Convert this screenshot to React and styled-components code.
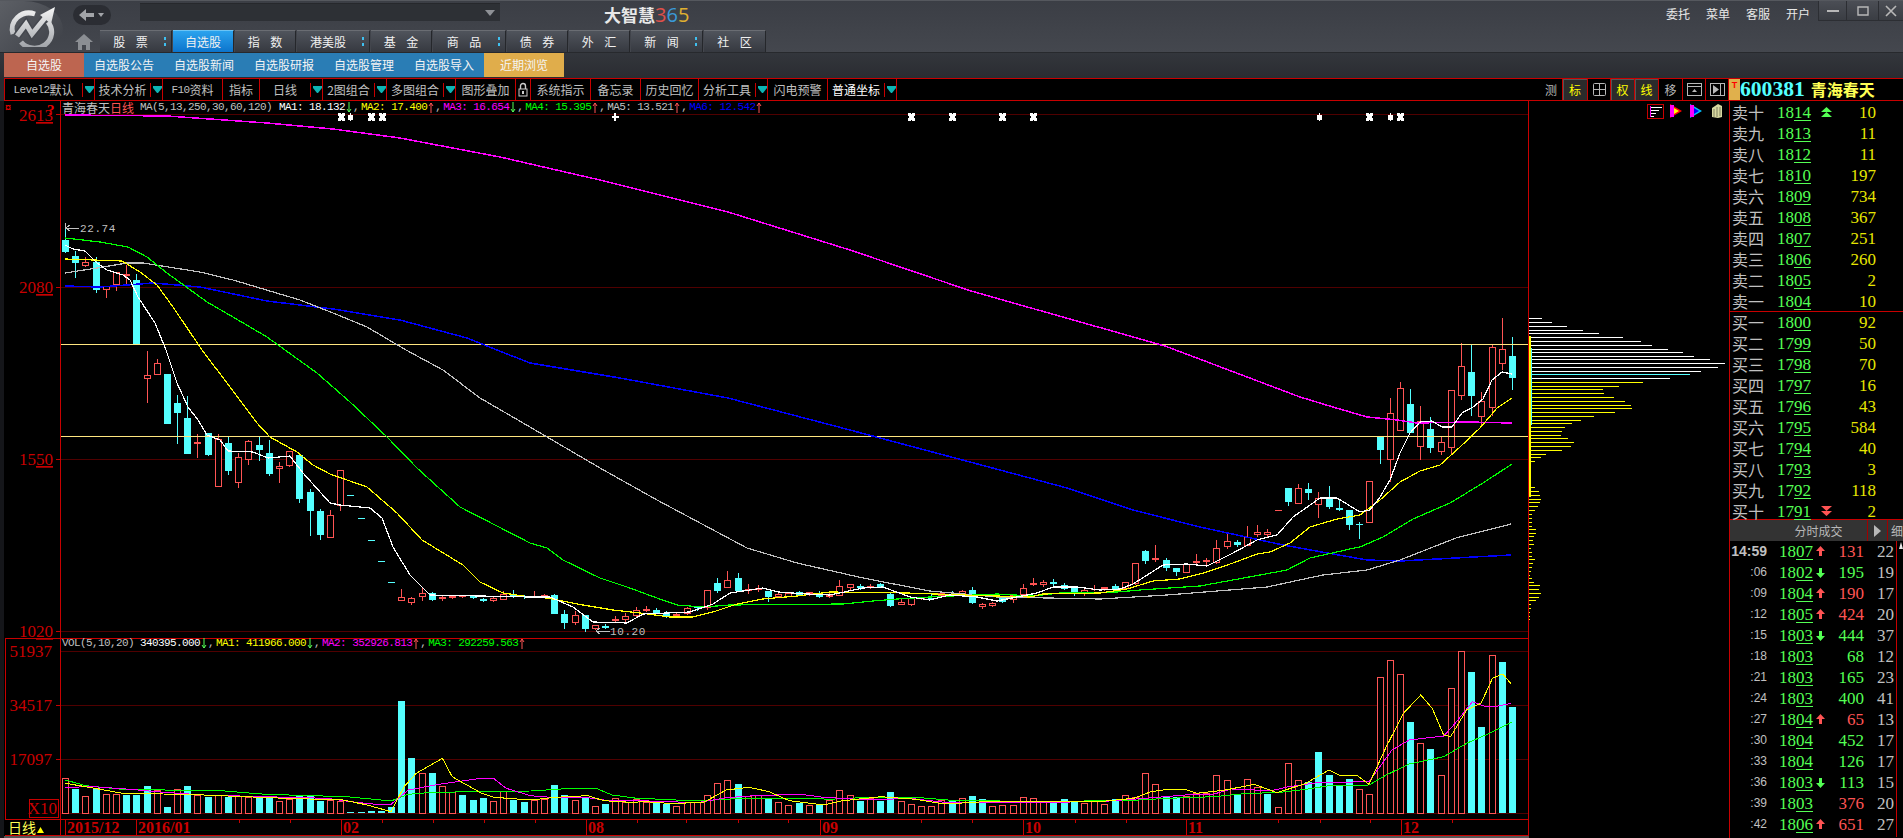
import React from 'react';
import styled, { createGlobalStyle } from 'styled-components';

const CJK = '"Noto Sans CJK SC", sans-serif';
const MONO = '"Liberation Mono", monospace';
const SERIF = '"Liberation Serif", serif';

const RED = '#c80000';
const UP = '#ff5454';
const DOWN = '#54ffff';
const GREEN = '#54ff54';
const QTY = '#e6e600';

const GlobalStyle = createGlobalStyle`
  html, body { margin: 0; padding: 0; background: #000; overflow: hidden; }
  * { box-sizing: border-box; }
`;

// ---- chart data, in page pixels ----
// [kind, body top, body bottom, high, low]
const CANDLES = [
  ['c',240,252,223,253],['c',256,263,251,278],['r',262,266,257,267],['c',262,290,257,293],['r',286,290,286,298],
  ['r',272,285,272,291],['r',274,276,265,285],['c',280,344,274,344],['r',375,379,351,403],['r',363,375,359,375],
  ['c',374,424,374,424],['c',403,413,395,444],['c',418,454,396,454],['r',442,444,434,458],['c',433,455,433,456],
  ['r',439,487,434,487],['c',443,471,437,475],['r',457,483,453,488],['r',441,460,440,465],['c',445,450,437,461],
  ['c',453,474,440,476],['r',466,469,462,483],['r',451,466,451,467],['c',455,499,455,503],['c',492,511,489,536],
  ['c',511,535,509,540],['r',515,538,510,538],['r',470,506,470,511],['c',495,495,495,495],['c',518,518,518,518],
  ['c',540,540,540,540],['c',561,561,561,561],['c',582,582,582,582],['r',597,601,589,601],['r',598,603,597,605],
  ['r',593,597,588,601],['c',593,600,592,601],['r',597,599,596,601],['r',596,598,595,599],['r',596,597,595,598],
  ['c',596,598,595,599],['c',599,601,598,602],['r',598,601,597,602],['r',594,600,591,600],['c',594,596,590,598],
  ['c',596,597,595,599],['r',596,597,591,598],['r',595,597,594,597],['c',595,614,594,614],['c',614,623,610,629],
  ['r',615,623,611,625],['c',615,629,615,632],['r',625,629,625,630],['c',626,628,624,629],['r',619,621,616,623],
  ['r',616,620,613,623],['r',610,616,607,618],['r',609,611,606,612],['c',610,613,608,614],['c',613,616,611,618],
  ['r',614,616,613,617],['r',608,614,607,615],['c',607,608,606,611],['r',590,608,590,610],['c',583,591,578,593],
  ['r',580,588,571,588],['c',578,591,573,592],['r',589,591,584,594],['r',588,590,585,592],['c',591,597,591,602],
  ['r',594,597,593,598],['r',593,597,593,597],['c',592,595,591,596],['r',592,594,592,596],['c',593,597,591,598],
  ['r',595,597,593,598],['r',586,596,580,596],['r',584,588,584,591],['c',586,588,584,590],['r',586,588,584,589],
  ['c',584,587,583,588],['c',594,606,593,607],['r',602,605,598,605],['r',598,605,598,606],['r',598,599,597,600],
  ['c',598,599,594,599],['r',593,596,592,596],['c',594,596,591,597],['r',591,595,590,595],['c',590,603,587,604],
  ['r',604,607,603,609],['r',603,606,602,607],['c',598,602,596,603],['r',595,600,594,603],['r',588,595,584,595],
  ['r',583,585,578,586],['r',582,585,580,587],['c',582,584,579,586],['c',585,589,583,590],['c',587,594,587,596],
  ['r',590,594,587,596],['r',589,590,585,591],['r',587,589,587,591],['c',586,590,584,593],['r',582,589,582,590],
  ['r',563,584,563,585],['c',551,561,550,564],['r',558,560,545,562],['c',560,568,558,571],['c',568,572,568,576],
  ['r',564,573,563,573],['r',561,563,554,566],['r',560,562,558,566],['r',548,563,540,564],['r',541,547,534,549],
  ['c',542,545,540,547],['r',537,546,526,546],['r',532,535,525,537],['r',532,535,529,538],['r',510,510,510,510],
  ['c',488,502,488,506],['r',488,504,484,504],['c',489,493,483,500],['r',498,505,492,518],['c',498,507,486,509],
  ['c',508,510,499,511],['c',510,525,510,530],['c',524,524,522,539],['r',481,523,481,523],['c',437,450,437,464],
  ['r',413,460,398,482],['r',388,431,382,431],['c',404,433,389,433],['r',421,447,406,460],['c',429,448,417,453],
  ['r',442,452,437,455],['r',390,448,390,454],['r',366,396,343,400],['c',372,396,345,416],['r',401,417,392,426],
  ['r',347,408,345,416],['r',349,364,318,370],['c',356,378,337,390],
];

const VOLUMES = [
  ['r',778],['c',789],['r',796],['c',788],['r',794],['r',794],['c',795],['c',795],['c',786],['r',790],
  ['c',807],['r',789],['c',786],['r',795],['c',797],['r',795],['c',797],['r',796],['r',797],['c',797],
  ['c',796],['r',801],['r',799],['c',796],['c',796],['c',801],['r',800],['r',801],['c',812],['c',812],
  ['c',811],['c',811],['c',807],['c',701],['c',758],['r',773],['c',773],['r',786],['r',792],['c',795],
  ['c',800],['c',798],['r',801],['r',791],['c',800],['c',802],['r',800],['r',799],['c',785],['c',795],
  ['r',800],['c',798],['r',806],['c',804],['r',798],['r',802],['r',799],['r',802],['c',801],['c',804],
  ['r',806],['r',802],['r',802],['r',795],['r',783],['r',780],['c',784],['r',796],['r',795],['c',799],
  ['r',802],['r',805],['c',803],['r',805],['c',805],['r',800],['r',790],['r',795],['c',801],['r',798],
  ['c',801],['c',792],['r',801],['r',804],['r',806],['r',806],['r',800],['c',801],['r',798],['c',796],
  ['c',799],['r',806],['r',805],['r',805],['r',797],['r',798],['r',802],['c',802],['c',799],['c',801],
  ['r',803],['r',801],['r',804],['c',799],['r',795],['r',797],['r',773],['r',784],['c',796],['c',797],
  ['r',796],['r',793],['r',793],['r',775],['r',780],['c',794],['r',779],['r',787],['c',794],['r',807],
  ['r',763],['r',780],['c',782],['c',752],['c',775],['c',785],['c',779],['r',789],['r',794],['r',677],
  ['r',660],['r',674],['c',722],['r',743],['c',749],['r',775],['r',688],['r',651],['c',672],['c',727],
  ['r',655],['c',662],['c',707],
];

const MAIN_LINES = [
  { color: '#ff00ff', width: 1.5, points: [[65,115],[167,116],[267,123],[333,129],[400,138],[500,157],[600,180],[728,212],[850,250],[971,291],[1165,346],[1300,397],[1333,407],[1367,417],[1397,420],[1417,423],[1467,422],[1512,423]] },
  { color: '#0000ff', width: 1.5, points: [[65,286],[100,287],[153,283],[200,287],[267,301],[333,309],[400,320],[467,338],[497,350],[530,363],[620,378],[728,398],[850,430],[1000,470],[1067,488],[1133,510],[1200,527],[1283,545],[1333,554],[1367,560],[1400,561],[1511,555]] },
  { color: '#c0c0c0', width: 1.2, points: [[65,273],[97,268],[127,263],[143,263],[200,272],[233,280],[300,300],[333,313],[367,327],[406,350],[443,370],[480,398],[530,427],[600,468],[657,500],[747,548],[797,563],[863,578],[930,591],[997,597],[1100,599],[1167,595],[1267,587],[1323,575],[1367,570],[1400,560],[1456,538],[1511,524]] },
  { color: '#00ff00', width: 1.2, points: [[65,238],[100,242],[128,247],[147,257],[167,273],[207,302],[233,317],[267,337],[285,350],[317,373],[350,402],[387,437],[417,468],[460,507],[530,543],[547,548],[563,560],[600,578],[627,587],[657,598],[677,605],[703,607],[730,605],[843,604],[873,601],[897,599],[930,597],[997,594],[1033,596],[1060,593],[1117,592],[1140,590],[1200,586],[1260,575],[1287,570],[1310,558],[1350,549],[1360,547],[1383,537],[1413,519],[1450,503],[1483,483],[1512,464]] },
  { color: '#ffff00', width: 1.2, points: [[65,259],[122,261],[140,272],[157,285],[173,307],[202,350],[227,383],[257,423],[270,437],[297,452],[313,465],[330,474],[367,487],[397,513],[422,540],[463,565],[480,582],[503,593],[530,597],[547,598],[583,605],[613,610],[640,613],[670,617],[693,617],[713,612],[737,604],[763,599],[797,596],[830,592],[907,593],[963,595],[1030,597],[1043,594],[1100,593],[1127,589],[1153,581],[1180,579],[1207,572],[1233,563],[1257,554],[1270,552],[1290,543],[1310,527],[1337,519],[1360,515],[1380,500],[1400,482],[1420,471],[1440,465],[1460,447],[1480,428],[1497,408],[1512,398]] },
  { color: '#ffffff', width: 1.2, points: [[65,245],[73,249],[85,251],[97,263],[107,270],[123,275],[130,280],[138,297],[155,323],[166,350],[177,383],[188,407],[198,420],[207,435],[220,440],[228,451],[253,452],[268,458],[290,456],[303,473],[330,503],[340,505],[370,508],[382,518],[393,547],[410,575],[430,595],[530,597],[550,597],[573,607],[593,622],[627,623],[643,614],[690,612],[713,604],[730,593],[763,588],[778,592],[807,594],[830,595],[863,588],[883,587],[910,597],[930,600],[950,595],[977,597],[997,601],[1037,593],[1053,587],[1077,587],[1100,590],[1120,589],[1133,584],[1163,565],[1187,564],[1207,566],[1233,553],[1257,540],[1277,535],[1293,517],[1320,498],[1337,498],[1360,512],[1370,510],[1380,497],[1390,480],[1400,453],[1410,433],[1420,422],[1432,421],[1442,427],[1452,427],[1462,413],[1473,407],[1483,399],[1492,380],[1502,372],[1512,374]] },
];

// readings off the chart: left part is 2.45 per pixel from x 0, right part 1.742 from x 640
const volLine = (left, right) => [
  ...left.map(([x, y]) => [x / 2.45, 630 + y / 3]),
  ...right.map(([x, y]) => [640 + x / 1.742, 640 + y / 3]),
];

const VOL_LINES = [
  { color: '#00ff00', points: volLine(
    [[160,450],[210,467],[300,478],[550,483],[650,493],[850,500],[958,513],[1000,493],[1060,487],[1300,483],[1400,475],[1460,475],[1500,495],[1560,505]],
    [[0,475],[100,483],[180,475],[300,475],[330,478],[400,472],[480,472],[550,482],[700,484],[850,482],[920,475],[1000,470],[1060,460],[1110,458],[1160,448],[1200,437],[1270,435],[1300,405],[1340,372],[1400,350],[1440,310],[1480,280],[1518,247]]) },
  { color: '#ff00ff', points: volLine(
    [[160,472],[230,470],[320,478],[400,487],[500,495],[650,500],[800,505],[860,515],[920,523],[958,523],[1000,480],[1080,462],[1120,455],[1180,445],[1209,445],[1240,475],[1300,497],[1360,503],[1440,503],[1480,510],[1560,510]],
    [[0,482],[100,488],[150,473],[200,467],[280,463],[320,472],[400,480],[470,475],[530,487],[600,487],[700,487],[800,485],[880,475],[950,465],[1000,462],[1030,447],[1100,452],[1130,440],[1180,428],[1270,425],[1310,330],[1340,300],[1400,288],[1420,250],[1450,185],[1470,198],[1495,198],[1518,190]]) },
  { color: '#ffff00', points: volLine(
    [[160,460],[210,470],[300,490],[400,492],[500,495],[600,500],[700,505],[840,510],[900,525],[958,545],[990,470],[1020,430],[1084,385],[1108,440],[1180,490],[1210,502],[1300,510],[1360,502],[1440,497],[1480,512],[1560,518]],
    [[0,484],[50,490],[110,488],[150,450],[190,442],[225,455],[260,482],[320,495],[350,483],[420,470],[480,478],[530,492],[600,485],[700,485],[800,485],[860,475],[890,455],[920,448],[950,448],[970,460],[1020,450],[1070,433],[1110,458],[1160,430],[1200,390],[1220,407],[1250,407],[1270,433],[1300,320],[1330,220],[1360,165],[1380,205],[1400,285],[1412,290],[1440,210],[1465,190],[1485,115],[1503,102],[1518,133]]) },
];

// chip distribution: [y, right end]
const chip = (base, rows) => rows.map(([y, end]) => [base + y / 3, 1500 + end / 3]);
const CHIP_WHITE = chip(300, [[55,126],[67,156],[77,201],[89,249],[100,297],[112,369],[124,423],[134,456],[146,504],[156,549],[169,582],[178,630],[190,675],[201,654],[213,603],[235,510]]);
const CHIP_CYAN = chip(300, [[223,570]]);
const CHIP_YELLOW = [
  ...chip(300, [[247,429],[259,357],[268,309],[280,312],[292,342],[304,375],[316,393],[325,396],[337,345],[349,282],[361,243],[370,216],[382,195],[394,186],[406,183],[415,204],[427,222],[439,213],[451,186],[463,138],[472,123],[484,105],[562,105],[574,117],[586,120],[598,123],[607,120],[619,114],[631,105],[643,96],[655,96],[667,96],[678,96],[688,108],[700,108],[709,102],[721,100],[733,102],[745,93],[757,96],[767,96],[778,105]]),
  ...chip(560, [[10,99],[20,96],[32,93],[44,90],[55,96],[67,102],[76,120],[88,117],[100,123],[112,117],[121,108],[133,93],[145,93],[157,90],[169,90],[178,90]]),
];

const MARKS = [[341,'s'],[350,'n'],[371,'s'],[382,'s'],[615,'p'],[911,'s'],[952,'s'],[1002,'s'],[1033,'s'],[1319,'n'],[1369,'s'],[1390,'n'],[1400,'s']];
const MINOR_TICKS = [239,290,382,433,484,535,637,686,738,788,921,972,1075,1126,1278,1320,1370,1452];
const DATE_LABELS = [['2015/12',65],['2016/01',136],['02',341],['08',586],['09',820],['10',1023],['11',1186],['12',1401]];

const SELL = [['卖十','1814','10','up'],['卖九','1813','11'],['卖八','1812','11'],['卖七','1810','197'],['卖六','1809','734'],['卖五','1808','367'],['卖四','1807','251'],['卖三','1806','260'],['卖二','1805','2'],['卖一','1804','10']];
const BUY = [['买一','1800','92'],['买二','1799','50'],['买三','1798','70'],['买四','1797','16'],['买五','1796','43'],['买六','1795','584'],['买七','1794','40'],['买八','1793','3'],['买九','1792','118'],['买十','1791','2','down']];
const TRADES = [
  ['14:59','1807','up','131',UP,'22'],[':06','1802','down','195',GREEN,'19'],[':09','1804','up','190',UP,'17'],
  [':12','1805','up','424',UP,'20'],[':15','1803','down','444',GREEN,'37'],[':18','1803','','68',GREEN,'12'],
  [':21','1803','','165',GREEN,'23'],[':24','1803','','400',GREEN,'41'],[':27','1804','up','65',UP,'13'],
  [':30','1804','','452',GREEN,'17'],[':33','1804','','126',GREEN,'17'],[':36','1803','down','113',GREEN,'15'],
  [':39','1803','','376',UP,'20'],[':42','1806','up','651',UP,'27'],
];

const TABS = [
  { label: '股 票', w: 72, dots: true }, { label: '自选股', w: 61, active: true }, { label: '指 数', w: 61 },
  { label: '港美股', w: 73, dots: true }, { label: '基 金', w: 61 }, { label: '商 品', w: 73, dots: true },
  { label: '债 券', w: 61 }, { label: '外 汇', w: 61 }, { label: '新 闻', w: 72, dots: true }, { label: '社 区', w: 62 },
];
const SUBNAV = [
  { label: '自选股', kind: 'current' }, { label: '自选股公告' }, { label: '自选股新闻' }, { label: '自选股研报' },
  { label: '自选股管理' }, { label: '自选股导入' }, { label: '近期浏览', kind: 'recent' },
];

const MAIN_LEGEND = [
  { name: 'MA1', value: '18.132', color: '#fff', dir: 'down' }, { name: 'MA2', value: '17.400', color: '#ff0', dir: 'up' },
  { name: 'MA3', value: '16.654', color: '#f0f', dir: 'down' }, { name: 'MA4', value: '15.395', color: '#0f0', dir: 'up' },
  { name: 'MA5', value: '13.521', color: '#c0c0c0', dir: 'up' }, { name: 'MA6', value: '12.542', color: '#00f', dir: 'up' },
];
const VOL_LEGEND = [
  { name: 'MA1', value: '411966.000', color: '#ff0', dir: 'down' }, { name: 'MA2', value: '352926.813', color: '#f0f', dir: 'up' },
  { name: 'MA3', value: '292259.563', color: '#0f0', dir: 'up' },
];

// ---- page frame ----
const Page = styled.div`
  width: 1903px;
  height: 838px;
  overflow: hidden;
  background: #000;
  font-family: ${CJK};
  font-size: 12px;
`;

const TopBar = styled.header`
  height: 53px;
  display: flex;
  background: linear-gradient(#3b3e45, #44474e);
  border-top: 1px solid #55585e;
  border-bottom: 1px solid #27292d;
`;

const LogoBox = styled.div`
  width: 63px;
  height: 51px;
  flex: none;
  background: linear-gradient(135deg, #5c5f65, #3d4047);
  border-radius: 0 46px 46px 0 / 0 34px 26px 0;
  display: flex;
  align-items: center;
  justify-content: center;
`;

const TopColumn = styled.div`
  flex: 1;
  display: flex;
  flex-direction: column;
`;

const TopRow = styled.div`
  height: 29px;
  display: flex;
  align-items: flex-start;
`;

const BackPill = styled.div`
  width: 38px;
  height: 20px;
  margin: 4px 0 0 10px;
  border-radius: 10px;
  background: #2b2d33;
  display: flex;
  align-items: center;
  justify-content: center;
`;

const SearchBox = styled.div`
  width: 360px;
  height: 18px;
  margin: 2px 0 0 29px;
  background: #2d3035;
  border-top: 1px solid #26282c;
  display: flex;
  align-items: center;
  justify-content: flex-end;
  padding-right: 5px;
`;

const Caret = styled.span`
  width: 0;
  height: 0;
  border-left: 5px solid transparent;
  border-right: 5px solid transparent;
  border-top: 6px solid #8e9196;
`;

const Title = styled.div`
  margin: 2px 0 0 104px;
  font-size: 17px;
  line-height: 24px;
  font-weight: 700;
  color: #e8e8e8;
  white-space: nowrap;
`;

const TitleDigit = styled.span`
  font-family: "Open Sans", sans-serif;
  font-weight: 400;
  font-size: 20px;
  color: ${(p) => p.$color};
`;

const TopMenu = styled.nav`
  margin: 3px 0 0 auto;
  display: flex;
  gap: 16px;
  line-height: 20px;
  color: #e8e8e8;
`;

const WindowButtons = styled.div`
  margin-left: 8px;
  display: flex;
  height: 20px;
`;

const WindowButton = styled.div`
  width: ${(p) => p.$w}px;
  height: 20px;
  background: linear-gradient(#4b4e55, #3a3d43);
  border-left: 1px solid #2c2e33;
  border-bottom: 1px solid #2c2e33;
  display: flex;
  align-items: center;
  justify-content: center;
`;

const TabRow = styled.nav`
  height: 22px;
  display: flex;
  align-items: flex-end;
  gap: 1px;
`;

const HomeBox = styled.div`
  width: 36px;
  height: 21px;
  display: flex;
  justify-content: flex-start;
  padding-left: 12px;
  align-items: center;
`;

const Tab = styled.div`
  position: relative;
  width: ${(p) => p.$w}px;
  height: 22px;
  line-height: 22px;
  text-align: center;
  white-space: pre;
  word-spacing: 8px;
  padding-right: ${(p) => (p.$dots ? 10 : 0)}px;
  color: #f0f0f0;
  background: ${(p) => (p.$active ? 'linear-gradient(#2ba3ee, #0c74cc)' : 'linear-gradient(#50545c, #363940)')};
  border-top: 1px solid ${(p) => (p.$active ? '#6cc4f5' : '#6a6d73')};
  border-right: 1px solid #25272b;
`;

const TabDots = styled.i`
  position: absolute;
  right: 5px;
  top: 6px;
  width: 2px;
  height: 9px;
  background: linear-gradient(#3fc0f0 3px, transparent 3px, transparent 6px, #3fc0f0 6px);
`;

const SubBar = styled.nav`
  height: 25px;
  padding-left: 4px;
  display: flex;
  background: linear-gradient(#33363c, #2a2c31);
`;

const SubItem = styled.div`
  width: 80px;
  height: 24px;
  line-height: 24px;
  text-align: center;
  color: #f4f4f4;
  background: ${(p) => (p.$kind === 'current' ? '#bd6550' : p.$kind === 'recent' ? '#e0ad4b' : '#2a7db5')};
`;

const ToolRow = styled.div`
  height: 23px;
  display: flex;
  background: #2a2c31;
  padding-left: 4px;
`;

const Toolbar = styled.div`
  width: 1725px;
  display: flex;
  background: #000;
  border: 1px solid ${RED};
  border-width: 1px 0 1px 1px;
`;

const ToolItem = styled.div`
  width: ${(p) => p.$w}px;
  flex: none;
  display: flex;
  align-items: center;
  color: ${(p) => (p.$bright ? '#fff' : '#c0c0c0')};
  border-right: 1px solid ${RED};
  white-space: nowrap;
`;

const ToolLabel = styled.span`
  flex: 1;
  display: flex;
  align-items: center;
  justify-content: center;
`;

const Latin = styled.span`
  font-family: ${MONO};
  font-size: 11px;
  letter-spacing: -0.6px;
`;

const MenuFlag = styled.span`
  flex: none;
  display: flex;
  align-items: center;
  height: 14px;
  border-left: 1px solid ${RED};
  padding-left: 2px;
`;

const ToolSpacer = styled.div`
  flex: 1;
`;

const SideTool = styled.div`
  width: ${(p) => p.$w}px;
  flex: none;
  display: flex;
  align-items: center;
  justify-content: center;
  color: ${(p) => (p.$on ? '#ffff00' : '#b8b8b8')};
  background: ${(p) => (p.$on ? '#2b2b2b' : '#000')};
  border-right: 1px solid ${RED};
  box-shadow: ${(p) => (p.$on ? 'inset 1px 1px 0 #555' : 'none')};
`;

const StockHeader = styled.div`
  width: 174px;
  display: flex;
  align-items: center;
  background: #000;
  border-top: 1px solid ${RED};
  border-bottom: 1px solid ${RED};
  white-space: nowrap;
`;

const StockFlag = styled.span`
  width: 11px;
  height: 21px;
  background: #e0b04c;
  color: #f00;
  font: 700 9px/12px "Liberation Sans", sans-serif;
  text-align: center;
`;

const StockCode = styled.span`
  font: 700 21.6px/21px ${SERIF};
  color: #54ffff;
  margin-right: 6px;
`;

const StockName = styled.span`
  font-size: 16px;
  font-weight: 700;
  line-height: 21px;
  color: #ffff54;
`;

const Body = styled.main`
  height: 737px;
  display: flex;
  padding-left: 4px;
  background: #15161a;
`;

const ChartArea = styled.section`
  position: relative;
  width: 1725px;
  height: 737px;
  flex: none;
`;

const ChartSvg = styled.svg`
  display: block;
  background: #000;
`;

const Legend = styled.div`
  position: absolute;
  left: 58px;
  top: ${(p) => p.$top}px;
  height: 13px;
  display: flex;
  align-items: center;
  gap: 2px;
  white-space: nowrap;
`;

const LegendTitle = styled.span`
  font-size: 12px;
  line-height: 13px;
  width: 72px;
  flex: none;
  margin-right: 4px;
  color: #c0c0c0;
`;

const TitleRed = styled.span`
  color: ${UP};
`;

const LegendText = styled.span`
  display: inline-flex;
  align-items: center;
  font: 11px/13px ${MONO};
  letter-spacing: -0.6px;
  color: ${(p) => p.$color || '#c0c0c0'};
  margin-right: ${(p) => p.$gap || 0}px;
  min-width: ${(p) => p.$min || 0}px;
`;

const LegendComma = styled.span`
  color: #c0c0c0;
`;

const AxisLabel = styled.text`
  font: 17px ${SERIF};
  fill: ${RED};
  text-anchor: end;
`;

const Underlined = styled.tspan`
  text-decoration: underline;
`;

const DateLabel = styled.text`
  font: 700 16px ${SERIF};
  fill: ${RED};
`;

const PriceNote = styled.text`
  font: 11px ${MONO};
  letter-spacing: 0.6px;
  fill: #c0c0c0;
`;

const PeriodLabel = styled.text`
  font: 14px ${CJK};
  fill: #ffff54;
`;

const HelpMark = styled.text`
  font: 700 ${(p) => p.$size}px ${SERIF};
  fill: #f00000;
`;

const SidePanel = styled.aside`
  width: 174px;
  flex: none;
  height: 737px;
  background: #000;
  border-left: 1px solid ${RED};
  overflow: hidden;
`;

const BookSection = styled.div`
  height: ${(p) => p.$h}px;
  padding-top: ${(p) => p.$pad || 0}px;
  border-bottom: 1px solid ${RED};
`;

const BookRow = styled.div`
  height: 21px;
  padding-left: 2px;
  display: grid;
  grid-template-columns: 45px 36px 27px 36px;
  align-items: center;
`;

const BookLabel = styled.span`
  font-size: 16px;
  line-height: 21px;
  color: #c0c0c0;
`;

const Digits = styled.span`
  font: 17px/21px ${SERIF};
  color: ${(p) => p.$color || GREEN};
  text-align: ${(p) => p.$align || 'left'};
`;

const PriceTail = styled.span`
  text-decoration: underline;
  text-underline-offset: 2px;
`;

const TrendBox = styled.span`
  display: flex;
  padding-left: 8px;
`;

const TradeHeader = styled.div`
  height: 21px;
  display: flex;
  background: #333;
  color: #b8b8b8;
`;

const TradeTitle = styled.div`
  width: 138px;
  line-height: 21px;
  text-align: center;
  padding-left: 40px;
  border-right: 1px solid #a00000;
`;

const TradeArrow = styled.div`
  width: 20px;
  display: flex;
  align-items: center;
  justify-content: center;
  border-right: 1px solid #a00000;
`;

const TradeTail = styled.div`
  flex: 1;
  line-height: 21px;
  padding-left: 3px;
  white-space: nowrap;
  overflow: hidden;
`;

const TradeBody = styled.div`
  display: flex;
`;

const TradeList = styled.div`
  width: 168px;
  height: 296px;
  border-right: 1px solid ${RED};
`;

const TradeRow = styled.div`
  height: 21px;
  display: grid;
  grid-template-columns: 37px 12px 36px 11px 38px 30px;
  align-items: center;
`;

const TimeCell = styled.span`
  text-align: right;
  color: #c0c0c0;
  font: ${(p) => (p.$full ? '700 14px/21px "Liberation Sans", sans-serif' : '12px/21px "Liberation Sans", sans-serif')};
`;

const ScrollStrip = styled.div`
  flex: 1;
  padding: 1px 0 0 2px;
`;

const ScrollCap = styled.span`
  display: block;
  width: 0;
  height: 0;
  border-left: 2px solid transparent;
  border-right: 2px solid transparent;
  border-bottom: 7px solid #e8e8e8;
`;

// ---- small drawings ----
function LockIcon() {
  return (
    <svg width="10" height="15" viewBox="0 0 10 15">
      <path d="M2.5 7V4a2.5 2.5 0 0 1 5 0v3" fill="none" stroke="#ccc" strokeWidth="1.4" />
      <rect x="1" y="7" width="8" height="7" fill="none" stroke="#ccc" />
      <rect x="4" y="9" width="2" height="3" fill="#ccc" />
    </svg>
  );
}

function GridIcon() {
  return (
    <svg width="13" height="13" viewBox="0 0 13 13">
      <rect x=".5" y=".5" width="12" height="12" rx="1" fill="none" stroke="#b8b8b8" />
      <path d="M6.5 1v11M1 6.5h11" stroke="#b8b8b8" />
    </svg>
  );
}

function PanelIcon() {
  return (
    <svg width="15" height="13" viewBox="0 0 15 13">
      <rect x=".5" y=".5" width="14" height="12" fill="none" stroke="#b8b8b8" />
      <path d="M1 3.5h13" stroke="#b8b8b8" />
      <path d="M5 9l2.5-3 2.5 3z" fill="#b8b8b8" />
    </svg>
  );
}

function PlayIcon() {
  return (
    <svg width="15" height="13" viewBox="0 0 15 13">
      <rect x=".5" y=".5" width="14" height="12" fill="none" stroke="#b8b8b8" />
      <path d="M3 2l6 4.5L3 11z" fill="#b8b8b8" />
      <path d="M10.500 1v11" stroke="#b8b8b8" />
    </svg>
  );
}

function MenuTriangle() {
  return (
    <MenuFlag>
      <svg width="9" height="9" viewBox="0 0 9 9">
        <path d="M0 1h9v2L5 8H4L0 3z" fill="#0cb4b4" />
      </svg>
    </MenuFlag>
  );
}

function LegendArrow({ dir }) {
  const color = dir === 'up' ? UP : GREEN;
  return (
    <svg width="8" height="13" viewBox="0 0 8 13">
      {dir === 'up'
        ? <path d="M4 12V2M2 5l2-3 2 3" fill="none" stroke={color} />
        : <path d="M4 1v10M2 8l2 3 2-3" fill="none" stroke={color} />}
    </svg>
  );
}

function TickArrow({ dir }) {
  const up = dir === 'up';
  return (
    <svg width="11" height="11" viewBox="0 0 11 11">
      {up
        ? <path d="M5.5 0L10 5H7v5H4V5H1z" fill={UP} />
        : <path d="M5.5 11L10 6H7V1H4v5H1z" fill={GREEN} />}
    </svg>
  );
}

function DoubleTriangle({ dir }) {
  const up = dir === 'up';
  const color = up ? GREEN : UP;
  return (
    <svg width="11" height="11" viewBox="0 0 11 11">
      {up
        ? <path d="M5.5 0L11 5H0zM5.5 5L11 10H0z" fill={color} />
        : <path d="M0 0h11L5.5 5zM0 5h11L5.5 10z" fill={color} />}
    </svg>
  );
}

function Logo() {
  return (
    <svg width="48" height="40" viewBox="0 0 48 40">
      <defs>
        <linearGradient id="logoFill" gradientUnits="userSpaceOnUse" x1="0" y1="0" x2="0" y2="40">
          <stop offset="0" stopColor="#f6f6f6" />
          <stop offset="1" stopColor="#a2a5aa" />
        </linearGradient>
      </defs>
      <path d="M5 27A17 16 0 0 1 27 7" fill="none" stroke="url(#logoFill)" strokeWidth="5" />
      <path d="M40 15A17 16 0 0 1 13 35" fill="none" stroke="url(#logoFill)" strokeWidth="5" />
      <path d="M9 29l9-12 6 10 13-16" fill="none" stroke="#44474e" strokeWidth="8" />
      <path d="M9 29l9-12 6 10 13-16" fill="none" stroke="url(#logoFill)" strokeWidth="5" />
      <path d="M47 0l-4 17-11-9z" fill="url(#logoFill)" />
    </svg>
  );
}

function Mark({ x, kind }) {
  if (kind === 'p') {
    return <path d={`M${x} 113v8M${x - 3} 117h7`} stroke="#fff" strokeWidth="2" />;
  }
  if (kind === 'n') {
    return <path d={`M${x} 113v8M${x - 2} 115h4v4h-4z`} stroke="#fff" fill="#fff" />;
  }
  return (
    <g>
      <rect x={x - 3} y={113} width={7} height={8} fill="#fff" />
      <rect x={x} y={113} width={1} height={1} fill="#000" />
      <rect x={x} y={120} width={1} height={1} fill="#000" />
      <rect x={x - 3} y={116} width={1} height={2} fill="#000" />
      <rect x={x + 3} y={116} width={1} height={2} fill="#000" />
    </g>
  );
}

function Candle({ data, index }) {
  const [kind, top, bottom, high, low] = data;
  const x = Math.floor(65.5 + 10.19 * index);
  const color = kind === 'c' ? DOWN : UP;
  const wick = low > high ? <rect x={x} y={high} width={1} height={low - high} fill={color} /> : null;
  if (kind === 'c' || bottom - top < 2) {
    return (
      <g>
        {wick}
        <rect x={x - 3} y={top} width={7} height={Math.max(bottom - top, 1)} fill={color} />
      </g>
    );
  }
  return (
    <g>
      {wick}
      <rect x={x - 2.5} y={top + 0.5} width={6} height={bottom - top - 1} fill="#000" stroke={color} />
    </g>
  );
}

function VolumeBar({ data, index }) {
  const [kind, top] = data;
  const x = Math.floor(65.5 + 10.19 * index);
  if (kind === 'c') return <rect x={x - 3} y={top} width={7} height={813 - top} fill={DOWN} />;
  return <rect x={x - 2.5} y={top + 0.5} width={6} height={812.5 - top} fill="#000" stroke={UP} />;
}

const toPoints = (points) => points.map(([x, y]) => `${x.toFixed(1)},${y.toFixed(1)}`).join(' ');

function TradeLine({ points, color, width = 1 }) {
  return <polyline points={toPoints(points)} fill="none" stroke={color} strokeWidth={width} shapeRendering="crispEdges" />;
}

function SplitLabel({ x, y, head, tail }) {
  return <AxisLabel x={x} y={y}>{head}<Underlined>{tail}</Underlined></AxisLabel>;
}

function ChartDrawing() {
  return (
    <ChartSvg width="1725" height="737" viewBox="4 101 1725 737">
      <g shapeRendering="crispEdges">
        {/* grid lines */}
        {[114, 287, 459, 631, 651, 705, 759, 813].map((y) => (
          <rect key={y} x={61} y={y} width={1467} height={1} fill="#500000" />
        ))}
        {[114, 287, 459, 631, 705, 759].map((y) => (
          <rect key={y} x={56} y={y} width={5} height={1} fill={RED} />
        ))}
        {CANDLES.map((c, i) => <Candle key={i} data={c} index={i} />)}
        {VOLUMES.map((v, i) => <VolumeBar key={i} data={v} index={i} />)}
        <rect x={61} y={344} width={1467} height={1} fill="#ffe680" />
        <rect x={61} y={436} width={1467} height={1} fill="#ffe680" />
      </g>

      {MAIN_LINES.map((l) => <TradeLine key={l.color} points={l.points} color={l.color} width={l.width} />)}
      {VOL_LINES.map((l) => <TradeLine key={l.color} points={l.points} color={l.color} />)}

      <g shapeRendering="crispEdges">
        {/* frame */}
        <rect x={60} y={101} width={1} height={737} fill={RED} />
        <rect x={1528} y={101} width={1} height={737} fill={RED} />
        <rect x={5} y={638} width={1524} height={1} fill={RED} />
        <rect x={5} y={819} width={1524} height={1} fill={RED} />
        <rect x={5} y={835} width={1524} height={1} fill={RED} />
        <rect x={5} y={638} width={1} height={181} fill={RED} />
        <rect x={4} y={836} width={1525} height={2} fill="#555" />

        {MARKS.map(([x, k]) => <Mark key={x} x={x} kind={k} />)}

        {/* date axis ticks */}
        {MINOR_TICKS.map((x) => <rect key={x} x={x} y={820} width={1} height={3} fill={RED} />)}
        {DATE_LABELS.map(([, x]) => <rect key={x} x={x} y={820} width={1} height={15} fill={RED} />)}

        {/* X10 box */}
        <rect x={29.5} y={799.5} width={29} height={18} fill="none" stroke={RED} />

        {/* price extremes */}
        <path d="M66 228h13M66 228l4-3M66 228l4 3" stroke="#c0c0c0" fill="none" />
        <rect x={65} y={223} width={1} height={6} fill="#c0c0c0" />
        <path d="M596 631h14M596 631l4-3M596 631l4 3" stroke="#c0c0c0" fill="none" />

        {/* chip distribution */}
        {CHIP_WHITE.map(([y, end]) => <rect key={y} x={1529} y={Math.round(y)} width={end - 1529} height={1} fill="#fff" />)}
        {CHIP_CYAN.map(([y, end]) => <rect key={y} x={1529} y={Math.round(y)} width={end - 1529} height={1} fill={DOWN} />)}
        {CHIP_YELLOW.map(([y, end]) => <rect key={y} x={1529} y={Math.round(y)} width={end - 1529} height={1} fill="#ffff00" />)}
        <rect x={1529} y={336} width={2} height={161} fill="#ffff00" />
        <rect x={1531} y={348} width={1} height={77} fill={DOWN} />

        {/* chip view switches */}
        <rect x={1647.5} y={104.5} width={16} height={14} fill="none" stroke={RED} />
        <path d="M1650 106v11" stroke="#f0f" strokeWidth="1" />
        <path d="M1651 107h11M1651 110h8M1651 113h5M1651 116h3" stroke="#fff" />
      </g>
      <path d="M1670 104l12 7-12 7z" fill="#ff0000" />
      <path d="M1670 105h4v12h-4z" fill="#ff00ff" />
      <path d="M1674 108l5 3-5 3z" fill="#ffff00" />
      <path d="M1690 104l12 7-12 7z" fill="#00c0ff" />
      <path d="M1690 105h4v12h-4z" fill="#ff00ff" />
      <path d="M1694 108l5 3-5 3z" fill="#0000ff" />
      <path d="M1712 108l6-4 4 2v11l-4 1-6-1z" fill="#d8d8a0" />
      <path d="M1714 109v8M1717 107v10M1720 107v9" stroke="#808060" />

      <HelpMark x={5} y={112} $size={12}>¤</HelpMark>
      <HelpMark x={47} y={115} $size={15}>?</HelpMark>

      <SplitLabel x={53} y={121} head="26" tail="13" />
      <SplitLabel x={53} y={293} head="20" tail="80" />
      <SplitLabel x={53} y={465} head="15" tail="50" />
      <SplitLabel x={53} y={637} head="10" tail="20" />
      <AxisLabel x={52} y={657}>51937</AxisLabel>
      <AxisLabel x={52} y={711}>34517</AxisLabel>
      <AxisLabel x={52} y={765}>17097</AxisLabel>
      <AxisLabel x={57} y={814}>X10</AxisLabel>

      <PriceNote x={80} y={232}>22.74</PriceNote>
      <PriceNote x={610} y={635}>10.20</PriceNote>

      <PeriodLabel x={8} y={833}>日线</PeriodLabel>
      <path d="M37 833l3.500-6 3.500 6z" fill="#ffff00" />
      {DATE_LABELS.map(([label, x]) => <DateLabel key={label} x={x + 2} y={833}>{label}</DateLabel>)}
    </ChartSvg>
  );
}

// toolbar contents use the components above, so they sit after them
const TOOLS = [
  { label: <><Latin>Level2</Latin>默认</>, w: 90, menu: true }, { label: '技术分析', w: 68, menu: true },
  { label: <><Latin>F10</Latin>资料</>, w: 60 }, { label: '指标', w: 37 }, { label: '日线', w: 63, menu: true },
  { label: '2图组合', w: 64, menu: true }, { label: '多图组合', w: 69, menu: true }, { label: '图形叠加', w: 60 },
  { label: <LockIcon />, w: 15 }, { label: '系统指示', w: 60 }, { label: '备忘录', w: 50 }, { label: '历史回忆', w: 58 },
  { label: '分析工具', w: 69, menu: true }, { label: '闪电预警', w: 60 }, { label: '普通坐标', w: 69, menu: true, bright: true },
];
const SIDE_TOOLS = [
  { label: '测', w: 23 }, { label: '标', w: 25, on: true }, { label: <GridIcon />, w: 23 }, { label: '权', w: 24, on: true },
  { label: '线', w: 24, on: true }, { label: '移', w: 24 }, { label: <PanelIcon />, w: 23 }, { label: <PlayIcon />, w: 23 },
];

function LegendRow({ top, title, params, first, items }) {
  return (
    <Legend $top={top}>
      {title}
      <LegendText $min={params.min} $gap={params.gap}>{params.text}</LegendText>
      {first}
      {items.map((m) => (
        <LegendText key={m.name} $color={m.color}>
          {m.name}: {m.value}
          <LegendArrow dir={m.dir} />
          <LegendComma>{m.name === items[items.length - 1].name ? '' : ','}</LegendComma>
        </LegendText>
      ))}
    </Legend>
  );
}

function Price({ value }) {
  return <Digits>{value.slice(0, 2)}<PriceTail>{value.slice(2)}</PriceTail></Digits>;
}

function BookLine({ row }) {
  const [label, price, qty, trend] = row;
  return (
    <BookRow>
      <BookLabel>{label}</BookLabel>
      <Price value={price} />
      <TrendBox>{trend ? <DoubleTriangle dir={trend} /> : null}</TrendBox>
      <Digits $color={QTY} $align="right">{qty}</Digits>
    </BookRow>
  );
}

export default function App() {
  return (
    <Page>
      <GlobalStyle />
      <TopBar>
        <LogoBox><Logo /></LogoBox>
        <TopColumn>
          <TopRow>
            <BackPill>
              <svg width="26" height="14" viewBox="0 0 26 14">
                <path d="M0 7l7-6v4h8v4H7v4z" fill="#a2a4a8" />
                <path d="M19 5h6l-3 4z" fill="#a2a4a8" />
              </svg>
            </BackPill>
            <SearchBox><Caret /></SearchBox>
            <Title>
              大智慧<TitleDigit $color="#e0504a">3</TitleDigit><TitleDigit $color="#3a9ad8">6</TitleDigit><TitleDigit $color="#e0b030">5</TitleDigit>
            </Title>
            <TopMenu>
              <span>委托</span><span>菜单</span><span>客服</span><span>开户</span>
            </TopMenu>
            <WindowButtons>
              <WindowButton $w={28}>
                <svg width="12" height="12" viewBox="0 0 12 12"><path d="M0 6h12" stroke="#b8b8b8" strokeWidth="2" /></svg>
              </WindowButton>
              <WindowButton $w={32}>
                <svg width="12" height="12" viewBox="0 0 12 12"><path d="M1 2h10v8H1z" fill="none" stroke="#b8b8b8" strokeWidth="1.4" /></svg>
              </WindowButton>
              <WindowButton $w={25}>
                <svg width="12" height="12" viewBox="0 0 12 12"><path d="M1 1l10 10M11 1L1 11" stroke="#b8b8b8" strokeWidth="1.6" /></svg>
              </WindowButton>
            </WindowButtons>
          </TopRow>
          <TabRow>
            <HomeBox>
              <svg width="18" height="16" viewBox="0 0 18 16">
                <path d="M9 0l9 8h-3v8h-4v-5H7v5H3V8H0z" fill="#8b8e93" />
              </svg>
            </HomeBox>
            {TABS.map((t) => (
              <Tab key={t.label} $w={t.w} $active={t.active} $dots={t.dots}>
                {t.label}
                {t.dots ? <TabDots /> : null}
              </Tab>
            ))}
          </TabRow>
        </TopColumn>
      </TopBar>

      <SubBar>
        {SUBNAV.map((s) => <SubItem key={s.label} $kind={s.kind}>{s.label}</SubItem>)}
      </SubBar>

      <ToolRow>
        <Toolbar>
          {TOOLS.map((t, i) => (
            <ToolItem key={i} $w={t.w} $bright={t.bright}>
              <ToolLabel>{t.label}</ToolLabel>
              {t.menu ? <MenuTriangle /> : null}
            </ToolItem>
          ))}
          <ToolSpacer />
          {SIDE_TOOLS.map((t, i) => <SideTool key={i} $w={t.w} $on={t.on}>{t.label}</SideTool>)}
        </Toolbar>
        <StockHeader>
          <StockFlag>T</StockFlag>
          <StockCode>600381</StockCode>
          <StockName>青海春天</StockName>
        </StockHeader>
      </ToolRow>

      <Body>
        <ChartArea>
          <ChartDrawing />
          <LegendRow
            top={0}
            title={<LegendTitle>青海春天<TitleRed>日线</TitleRed></LegendTitle>}
            params={{ text: 'MA(5,13,250,30,60,120)', min: 132, gap: 5 }}
            items={MAIN_LEGEND}
          />
          <LegendRow
            top={536}
            title={null}
            params={{ text: 'VOL(5,10,20)', min: 76, gap: 0 }}
            first={<LegendText $color="#fff">340395.000<LegendArrow dir="down" /><LegendComma>,</LegendComma></LegendText>}
            items={VOL_LEGEND}
          />
        </ChartArea>

        <SidePanel>
          <BookSection $h={211} $pad={1}>
            {SELL.map((r) => <BookLine key={r[0]} row={r} />)}
          </BookSection>
          <BookSection $h={208}>
            {BUY.map((r) => <BookLine key={r[0]} row={r} />)}
          </BookSection>
          <TradeHeader>
            <TradeTitle>分时成交</TradeTitle>
            <TradeArrow>
              <svg width="7" height="12" viewBox="0 0 7 12"><path d="M0 0l7 6-7 6z" fill="#b8b8b8" /></svg>
            </TradeArrow>
            <TradeTail>细</TradeTail>
          </TradeHeader>
          <TradeBody>
            <TradeList>
              {TRADES.map(([time, price, trend, vol, color, count]) => (
                <TradeRow key={time}>
                  <TimeCell $full={time.length > 3}>{time}</TimeCell>
                  <span />
                  <Price value={price} />
                  <span>{trend ? <TickArrow dir={trend} /> : null}</span>
                  <Digits $color={color} $align="right">{vol}</Digits>
                  <Digits $color="#c0c0c0" $align="right">{count}</Digits>
                </TradeRow>
              ))}
            </TradeList>
            <ScrollStrip><ScrollCap /></ScrollStrip>
          </TradeBody>
        </SidePanel>
      </Body>
    </Page>
  );
}
